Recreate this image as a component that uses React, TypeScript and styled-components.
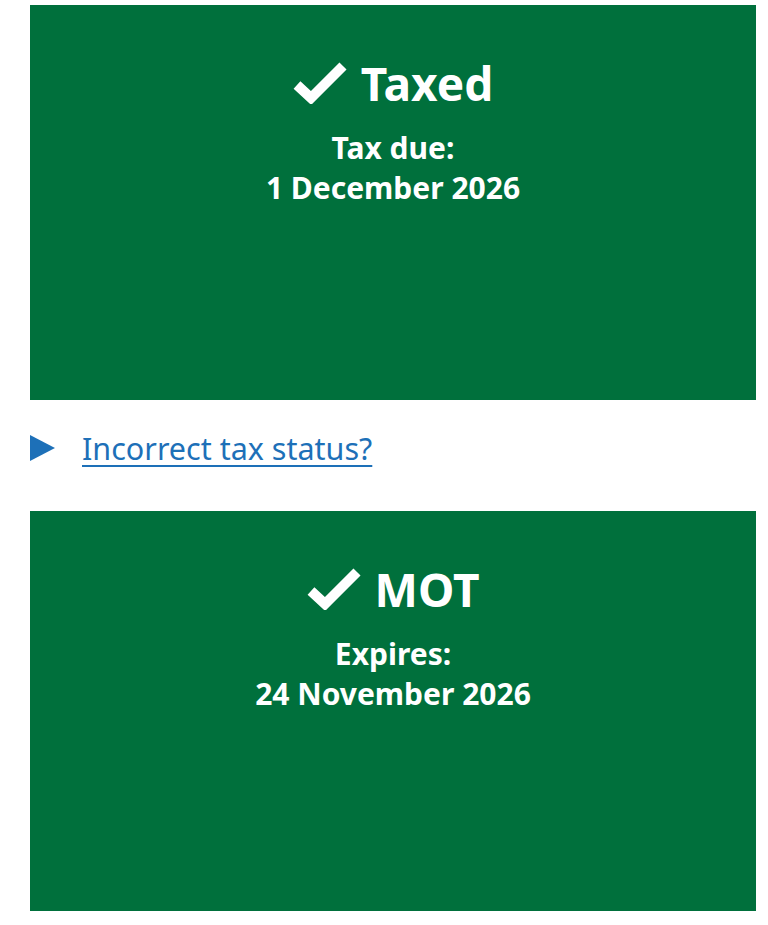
import React from "react";
import styled, { createGlobalStyle } from "styled-components";

const Global = createGlobalStyle`
  html, body { margin: 0; padding: 0; background: #ffffff; }
  body { font-family: "Noto Sans", Arial, sans-serif; }
`;

const Page = styled.main`
  display: flex;
  flex-direction: column;
  padding: 5px 12px 14px 30px;
  width: 726px;
`;

const StatusPanel = styled.section<{ $height: number }>`
  background: #00703c;
  color: #ffffff;
  height: ${(p) => p.$height}px;
  box-sizing: border-box;
  padding-top: 49px;
  display: flex;
  flex-direction: column;
  align-items: center;
  text-align: center;
`;

const Title = styled.h2`
  margin: 0;
  display: flex;
  align-items: center;
  gap: 14px;
  font-size: 46px;
  line-height: 58px;
  font-weight: 700;
`;

const Line = styled.p<{ $gap?: number }>`
  margin: ${(p) => p.$gap ?? 0}px 0 0;
  font-size: 30px;
  line-height: 40px;
  font-weight: 700;
`;

const Details = styled.div`
  display: flex;
  align-items: center;
  gap: 27px;
  height: 111px;
  box-sizing: border-box;
  padding-bottom: 16px;
`;

const Arrow = styled.span`
  width: 0;
  height: 0;
  border-top: 13px solid transparent;
  border-bottom: 13px solid transparent;
  border-left: 25px solid #1d70b8;
`;

const Link = styled.a`
  font-size: 30.5px;
  line-height: 40px;
  color: #1d70b8;
  text-decoration: underline;
  text-decoration-thickness: 2px;
  text-underline-offset: 5px;
  font-weight: 400;
  cursor: pointer;
`;

const Check = () => (
  <svg width="54" height="42" viewBox="0 0 54 42" aria-hidden="true">
    <path d="M4 23 L18 36 L50 4" fill="none" stroke="#fff" strokeWidth="10" strokeLinecap="butt" strokeLinejoin="miter" />
  </svg>
);

const Panel = ({ title, label, date, height }: { title: string; label: string; date: string; height: number }) => (
  <StatusPanel $height={height}>
    <Title>
      <Check />
      {title}
    </Title>
    <Line $gap={16}>{label}</Line>
    <Line>{date}</Line>
  </StatusPanel>
);

export default function App() {
  return (
    <>
      <Global />
      <Page>
        <Panel title="Taxed" label="Tax due:" date="1 December 2026" height={395} />
        <Details>
          <Arrow />
          <Link>Incorrect tax status?</Link>
        </Details>
        <Panel title="MOT" label="Expires:" date="24 November 2026" height={400} />
      </Page>
    </>
  );
}
